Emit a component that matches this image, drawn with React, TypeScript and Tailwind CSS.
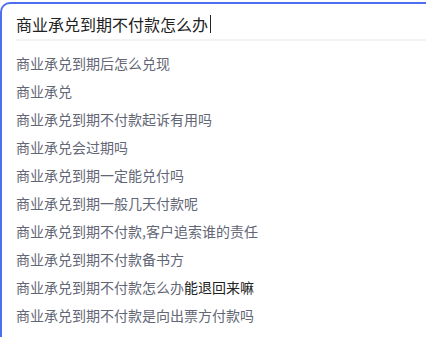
const suggestions: { base: string; extra?: string }[] = [
  { base: "商业承兑到期后怎么兑现" },
  { base: "商业承兑" },
  { base: "商业承兑到期不付款起诉有用吗" },
  { base: "商业承兑会过期吗" },
  { base: "商业承兑到期一定能兑付吗" },
  { base: "商业承兑到期一般几天付款呢" },
  { base: "商业承兑到期不付款,客户追索谁的责任" },
  { base: "商业承兑到期不付款备书方" },
  { base: "商业承兑到期不付款怎么办", extra: "能退回来嘛" },
  { base: "商业承兑到期不付款是向出票方付款吗" },
];

const App = () => {
  return (
    <div
      className="w-[426px] h-[337px] overflow-hidden bg-white pt-[2px]"
      style={{ fontFamily: '"Noto Sans CJK SC", "Noto Sans", sans-serif' }}
    >
      <div className="w-[440px] h-[360px] border-t-2 border-l-2 border-[#4e6ef2] rounded-tl-[10px] bg-white">
        <div className="h-[35px] pt-[8px] pl-[14px]">
          <div className="flex items-center text-[16px] leading-[24px] text-[#222]">
            <span>商业承兑到期不付款怎么办</span>
            <span className="ml-[2px] w-px h-[18px] bg-[#222]" />
          </div>
        </div>
        <div className="ml-[14px] h-[2px] bg-[#f3f3f3]" />
        <ul className="pt-[8px] pl-[14px]">
          {suggestions.map((s, i) => (
            <li key={i} className="h-[28px] leading-[28px] text-[14px] text-[#626675]">
              {s.base}
              {s.extra && <span className="text-[#222]">{s.extra}</span>}
            </li>
          ))}
        </ul>
      </div>
    </div>
  );
};

export default App;
